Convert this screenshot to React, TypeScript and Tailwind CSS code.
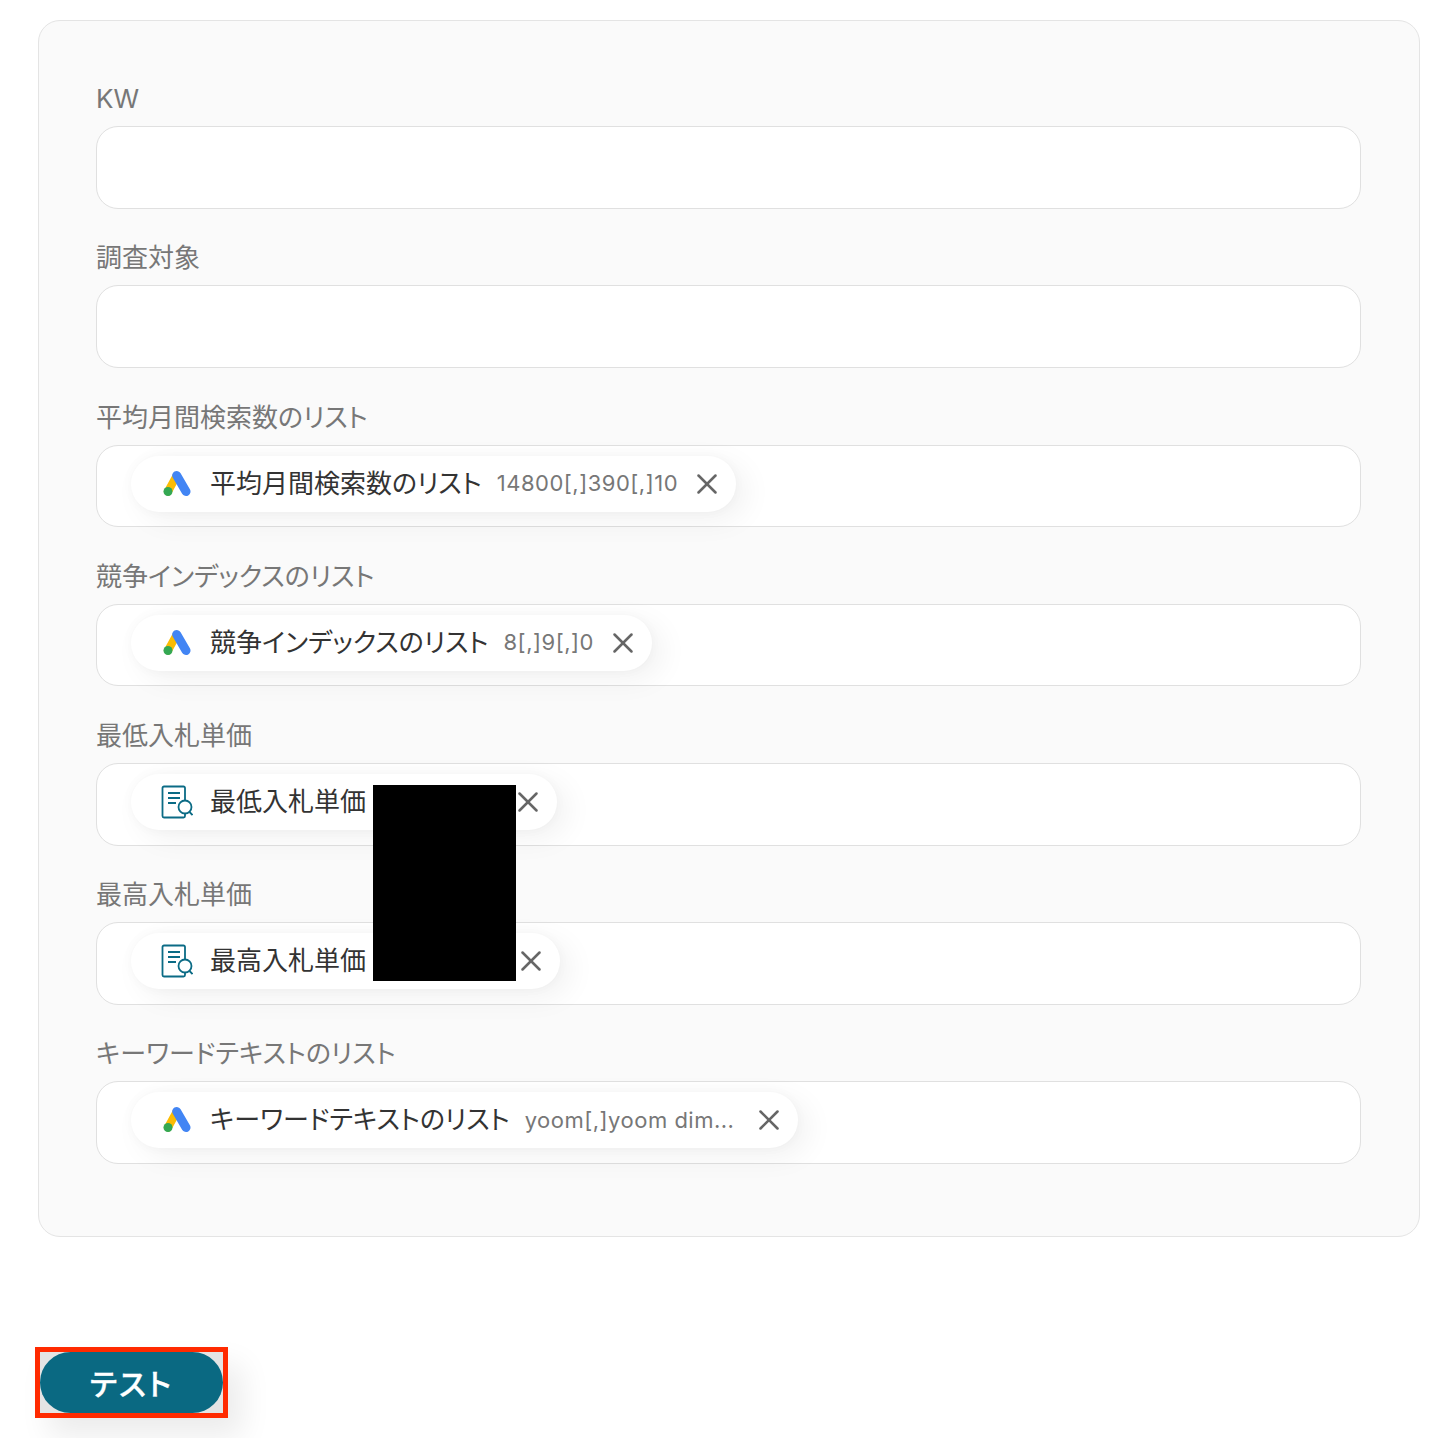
import { X } from "lucide-react";

type Chip = { icon: "ads" | "doc"; name: string; value?: string; width: string };

const FIELDS: { label: string; chip?: Chip }[] = [
  { label: "KW" },
  { label: "調査対象" },
  { label: "平均月間検索数のリスト", chip: { icon: "ads", name: "平均月間検索数のリスト", value: "14800[,]390[,]10", width: "w-[605px]" } },
  { label: "競争インデックスのリスト", chip: { icon: "ads", name: "競争インデックスのリスト", value: "8[,]9[,]0", width: "w-[521px]" } },
  { label: "最低入札単価", chip: { icon: "doc", name: "最低入札単価", width: "w-[426px]" } },
  { label: "最高入札単価", chip: { icon: "doc", name: "最高入札単価", width: "w-[429px]" } },
  { label: "キーワードテキストのリスト", chip: { icon: "ads", name: "キーワードテキストのリスト", value: "yoom[,]yoom dim...", width: "w-[667px]" } },
];

function AdsIcon() {
  return (
    <svg width="28" height="28" viewBox="0 0 28 28" fill="none">
      <path d="M13.5 6 L5 21.5" stroke="#fbbc04" strokeWidth="8" strokeLinecap="round" />
      <path d="M13.7 5.5 L23 21.5" stroke="#4285f4" strokeWidth="9" strokeLinecap="round" />
      <circle cx="5" cy="21.5" r="4.5" fill="#34a853" />
    </svg>
  );
}

function DocIcon() {
  return (
    <svg width="32" height="34" viewBox="0 0 32 34" fill="none" stroke="#0b6b85" strokeWidth="1.8">
      <path d="M24 15.5 V3 a1.5 1.5 0 0 0 -1.5 -1.5 H3 A1.5 1.5 0 0 0 1.5 3 V31 a1.5 1.5 0 0 0 1.5 1.5 H22.5 a1.5 1.5 0 0 0 1.5 -1.5 V28.5" />
      <path d="M7 8 H19 M7 13 H19 M7 18 H15" />
      <circle cx="24" cy="22" r="6.5" />
      <path d="M28.5 27 L31.5 30" />
    </svg>
  );
}

function ChipPill({ chip }: { chip: Chip }) {
  return (
    <div className={`${chip.width} h-[56px] rounded-full bg-white flex items-center pl-[30px] shadow-[10px_8px_30px_rgba(0,0,0,0.06),0_0_12px_rgba(0,0,0,0.03)]`}>
      <div className="w-[32px] flex justify-center shrink-0">
        {chip.icon === "ads" ? <AdsIcon /> : <DocIcon />}
      </div>
      <span className="ml-[17px] text-[26px] leading-none text-[#333] whitespace-nowrap [font-feature-settings:'palt']">{chip.name}</span>
      {chip.value && (
        <span className="ml-[15px] text-[22px] tracking-[0.5px] text-[#777] whitespace-nowrap">{chip.value}</span>
      )}
      <X className="ml-auto mr-[12px] text-[#666]" size={34} strokeWidth={1.8} />
    </div>
  );
}

export default function App() {
  return (
    <div className="relative h-[1438px] bg-white pt-[20px] pl-[38px] overflow-hidden font-['Inter','Noto_Sans_CJK_JP',sans-serif]">
      {/* Form panel */}
      <div className="w-[1382px] h-[1217px] rounded-[22px] border border-[#e4e4e4] bg-[#fafafa] pt-[60.14px] pl-[57px] pr-[58px] flex flex-col gap-[31.64px]">
        {FIELDS.map((f) => (
          <div key={f.label}>
            <div className="h-[37px] text-[26px] leading-[35px] text-[#777] [font-feature-settings:'palt']">{f.label}</div>
            <div className="h-[82.6px] rounded-[22px] border border-[#e0e0e0] bg-white pl-[34px] pt-[10px] mt-[8px]">
              {f.chip && <ChipPill chip={f.chip} />}
            </div>
          </div>
        ))}
      </div>

      {/* Redacted block */}
      <div className="absolute left-[373px] top-[785px] w-[143px] h-[196px] bg-black" />

      {/* Test button */}
      <div className="mt-[110px] -ml-[3px] w-[193px] h-[71px] border-[5px] border-[#ff2a00] bg-[#e4e4e4] shadow-[14px_18px_30px_rgba(0,0,0,0.08)]">
        <button className="block w-[183px] h-[61px] rounded-full bg-[#0a6982] text-white text-[30px] font-medium pt-[4px] [font-feature-settings:'palt'] tracking-[2px] [-webkit-text-stroke:0.3px_white]">
          テスト
        </button>
      </div>
    </div>
  );
}
